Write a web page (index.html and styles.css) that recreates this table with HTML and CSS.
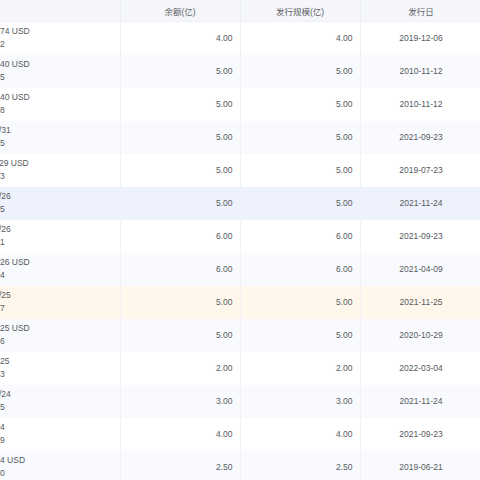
FILE: index.html
```html
<!DOCTYPE html>
<html lang="zh-CN">
<head>
<meta charset="utf-8">
<link rel="stylesheet" href="styles.css">
</head>
<body>
<div class="scroller">
<table class="grid">
  <colgroup><col class="c1"><col class="c2"><col class="c3"><col class="c4"></colgroup>
  <thead>
    <tr><th class="name"></th><th>余额(亿)</th><th>发行规模(亿)</th><th>发行日</th></tr>
  </thead>
  <tbody>
    <tr><td class="name"><div class="l">74 USD</div><div class="l">2</div></td><td class="num">4.00</td><td class="num">4.00</td><td class="date">2019-12-06</td></tr>
    <tr class="alt"><td class="name"><div class="l">40 USD</div><div class="l">5</div></td><td class="num">5.00</td><td class="num">5.00</td><td class="date">2010-11-12</td></tr>
    <tr><td class="name"><div class="l">40 USD</div><div class="l">8</div></td><td class="num">5.00</td><td class="num">5.00</td><td class="date">2010-11-12</td></tr>
    <tr class="alt"><td class="name"><div class="l cut">/31</div><div class="l">5</div></td><td class="num">5.00</td><td class="num">5.00</td><td class="date">2021-09-23</td></tr>
    <tr><td class="name"><div class="l cut">29 USD</div><div class="l">3</div></td><td class="num">5.00</td><td class="num">5.00</td><td class="date">2019-07-23</td></tr>
    <tr class="hover"><td class="name"><div class="l cut">/26</div><div class="l">5</div></td><td class="num">5.00</td><td class="num">5.00</td><td class="date">2021-11-24</td></tr>
    <tr><td class="name"><div class="l cut">/26</div><div class="l">1</div></td><td class="num">6.00</td><td class="num">6.00</td><td class="date">2021-09-23</td></tr>
    <tr class="alt"><td class="name"><div class="l">26 USD</div><div class="l">4</div></td><td class="num">6.00</td><td class="num">6.00</td><td class="date">2021-04-09</td></tr>
    <tr class="mark"><td class="name"><div class="l cut">/25</div><div class="l">7</div></td><td class="num">5.00</td><td class="num">5.00</td><td class="date">2021-11-25</td></tr>
    <tr class="alt"><td class="name"><div class="l">25 USD</div><div class="l">6</div></td><td class="num">5.00</td><td class="num">5.00</td><td class="date">2020-10-29</td></tr>
    <tr><td class="name"><div class="l">25</div><div class="l">3</div></td><td class="num">2.00</td><td class="num">2.00</td><td class="date">2022-03-04</td></tr>
    <tr class="alt"><td class="name"><div class="l cut">/24</div><div class="l">5</div></td><td class="num">3.00</td><td class="num">3.00</td><td class="date">2021-11-24</td></tr>
    <tr><td class="name"><div class="l">4</div><div class="l">9</div></td><td class="num">4.00</td><td class="num">4.00</td><td class="date">2021-09-23</td></tr>
    <tr class="alt"><td class="name"><div class="l">4 USD</div><div class="l">0</div></td><td class="num">2.50</td><td class="num">2.50</td><td class="date">2019-06-21</td></tr>
  </tbody>
</table>
</div>
</body>
</html>
```
FILE: styles.css
```css
html, body {
  margin: 0;
  padding: 0;
  background: #ffffff;
}
.scroller {
  width: 480px;
  height: 480px;
  overflow: hidden;
}
.grid {
  border-collapse: collapse;
  table-layout: fixed;
  width: 482px;
  font-family: "Liberation Sans", "Noto Sans CJK SC", sans-serif;
  font-size: 8.5px;
  color: #555a60;
}
.c1, .c2, .c3 { width: 120px; }
.c4 { width: 122px; }
.grid th {
  height: 21px;
  padding: 0;
  background: #f4f6fa;
  color: #5f6368;
  font-weight: normal;
  text-align: center;
  border-right: 1px solid #eceff4;
  border-bottom: 1px solid #eceff4;
}
.grid td {
  height: 33px;
  padding: 0;
  border-right: 1px solid #f0f2f6;
  box-sizing: border-box;
}
.grid tr.alt td { background: #f9fafe; }
.grid tr.hover td { background: #eef2fc; }
.grid tr.mark td { background: #fff7ec; }
.grid td.num {
  text-align: right;
  padding-right: 7px;
}
.grid td.date {
  text-align: center;
}
.grid td.name {
  text-align: left;
  padding-left: 0;
  overflow: hidden;
  white-space: nowrap;
}
.l {
  line-height: 13px;
}
.l.cut {
  margin-left: -1px;
}
```
